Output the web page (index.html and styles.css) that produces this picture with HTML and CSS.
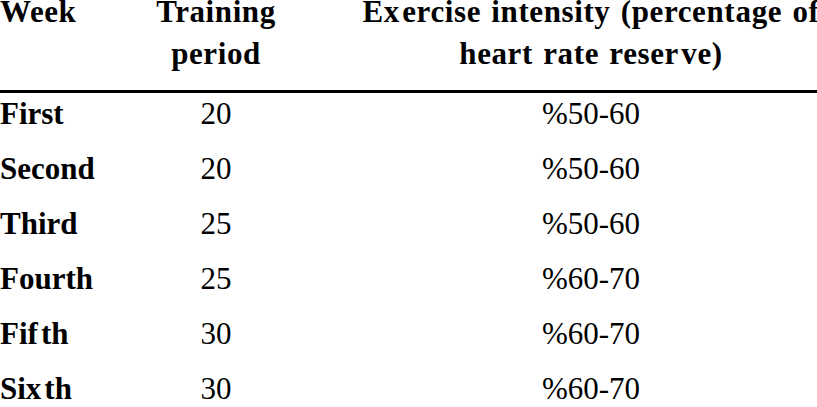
FILE: index.html
```html
<!DOCTYPE html>
<html lang="en">
<head>
<meta charset="utf-8">
<title>Training program</title>
<link rel="stylesheet" href="styles.css">
</head>
<body>
<div class="table">
  <div class="row head">
    <div class="c1"><span class="l1">Week</span></div>
    <div class="c2"><span class="l1">Training</span><span class="l2">period</span></div>
    <div class="c3"><span class="l1">E<span class="sp">x</span>ercise intensity (percen<span class="sp1">t</span>age of</span><span class="l2">heart rate rese<span class="sp">r</span>ve)</span></div>
  </div>
  <div class="row"><div class="c1">First</div><div class="c2">20</div><div class="c3">%50-60</div></div>
  <div class="row"><div class="c1">Second</div><div class="c2">20</div><div class="c3">%50-60</div></div>
  <div class="row"><div class="c1">Third</div><div class="c2">25</div><div class="c3">%50-60</div></div>
  <div class="row"><div class="c1">Fourth</div><div class="c2">25</div><div class="c3">%60-70</div></div>
  <div class="row"><div class="c1">Fi<span class="sp">f</span>th</div><div class="c2">30</div><div class="c3">%60-70</div></div>
  <div class="row"><div class="c1">Si<span class="sp">x</span>th</div><div class="c2">30</div><div class="c3">%60-70</div></div>
</div>
</body>
</html>
```

FILE: styles.css
```css
html, body {
  margin: 0;
  padding: 0;
  background: #ffffff;
  overflow: hidden;
}
body {
  font-family: "Liberation Serif", "Times New Roman", serif;
  font-size: 31px;
  color: #000000;
}
.table {
  width: 820px;
}
.row {
  display: grid;
  grid-template-columns: 140px 152px 528px;
  line-height: 34px;
  padding: 4px 0 17px;
  white-space: nowrap;
}
.row.head {
  font-weight: bold;
  padding: 0 0 19px;
  border-bottom: 3px solid #000000;
  letter-spacing: 0.6px;
  word-spacing: 2px;
}
.l1 {
  display: block;
  line-height: 23px;
}
.l2 {
  display: block;
  line-height: 34px;
  padding-top: 14px;
}
.c1 {
  font-weight: bold;
  text-align: left;
}
.c2 {
  text-align: center;
}
.c3 {
  text-align: center;
  padding-left: 70px;
}
.sp {
  letter-spacing: 3px;
}
.sp1 {
  letter-spacing: 1px;
}
```
